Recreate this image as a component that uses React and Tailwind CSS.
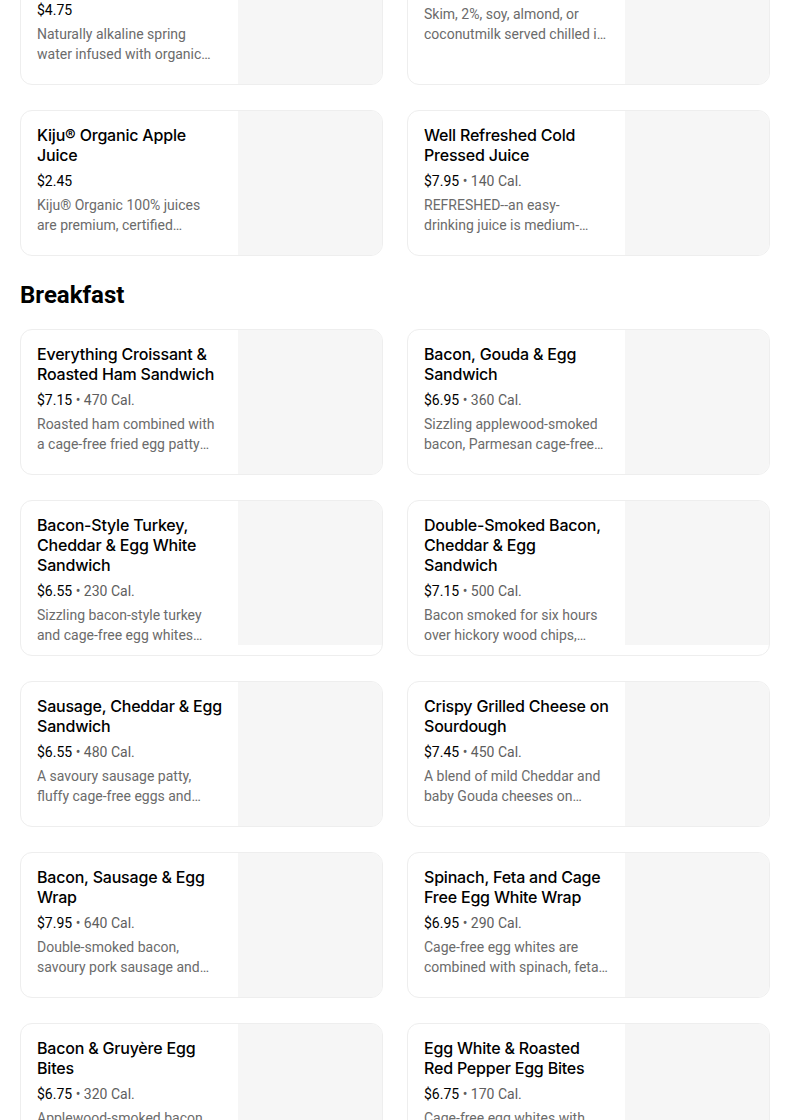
const drinks = [
  { name: 'Flow Organic Lemon Ginger Spring Water', price: '$4.75', desc: 'Naturally alkaline spring water infused with organic lemon and ginger for a refreshing taste.' },
  { name: 'Milk', price: '$2.25', cal: '130 Cal.', desc: 'Skim, 2%, soy, almond, or coconutmilk served chilled in a cup.' },
  { name: 'Kiju® Organic Apple Juice', price: '$2.45', desc: 'Kiju® Organic 100% juices are premium, certified organic and made with no added sugar.' },
  { name: 'Well Refreshed Cold Pressed Juice', price: '$7.95', cal: '140 Cal.', desc: 'REFRESHED--an easy-drinking juice is medium-bodied with notes of cucumber and mint.' },
];

const breakfast = [
  { name: 'Everything Croissant & Roasted Ham Sandwich', price: '$7.15', cal: '470 Cal.', desc: 'Roasted ham combined with a cage-free fried egg patty and Swiss cheese on a croissant.' },
  { name: 'Bacon, Gouda & Egg Sandwich', price: '$6.95', cal: '360 Cal.', desc: 'Sizzling applewood-smoked bacon, Parmesan cage-free frittata and aged Gouda.' },
  { name: 'Bacon-Style Turkey, Cheddar & Egg White Sandwich', price: '$6.55', cal: '230 Cal.', desc: 'Sizzling bacon-style turkey and cage-free egg whites with melted Cheddar.' },
  { name: 'Double-Smoked Bacon, Cheddar & Egg Sandwich', price: '$7.15', cal: '500 Cal.', desc: 'Bacon smoked for six hours over hickory wood chips, layered with a fried egg.' },
  { name: 'Sausage, Cheddar & Egg Sandwich', price: '$6.55', cal: '480 Cal.', desc: 'A savoury sausage patty, fluffy cage-free eggs and aged Cheddar cheese.' },
  { name: 'Crispy Grilled Cheese on Sourdough', price: '$7.45', cal: '450 Cal.', desc: 'A blend of mild Cheddar and baby Gouda cheeses on sourdough bread.' },
  { name: 'Bacon, Sausage & Egg Wrap', price: '$7.95', cal: '640 Cal.', desc: 'Double-smoked bacon, savoury pork sausage and cage-free scrambled eggs.' },
  { name: 'Spinach, Feta and Cage Free Egg White Wrap', price: '$6.95', cal: '290 Cal.', desc: 'Cage-free egg whites are combined with spinach, feta cheese and tomatoes.' },
  { name: 'Bacon & Gruyère Egg Bites', price: '$6.75', cal: '320 Cal.', desc: 'Applewood-smoked bacon and Gruyère cheese in cage-free egg bites.' },
  { name: 'Egg White & Roasted Red Pepper Egg Bites', price: '$6.75', cal: '170 Cal.', desc: 'Cage-free egg whites with Monterey Jack cheese and roasted red peppers.' },
];

function ItemCard({ item }) {
  return (
    <div className="flex border border-[#eeeeee] rounded-xl overflow-hidden bg-white">
      <div className="flex-1 min-w-0 px-4 pt-[14px] pb-[10px]">
        <div className="font-['Inter',sans-serif] text-[16px] leading-5 font-medium tracking-[-0.2px] text-black">{item.name}</div>
        <div className="mt-[6px] text-[14px] leading-5 text-black">
          {item.price}
          {item.cal && <span className="text-[#5e5e5e]"> • {item.cal}</span>}
        </div>
        <div className="mt-1 text-[14px] leading-5 text-[#6b6b6b] line-clamp-2">{item.desc}</div>
      </div>
      <div className="w-[144px] h-[144px] shrink-0 bg-[#f6f6f6]" />
    </div>
  );
}

export default function App() {
  return (
    <div className="bg-white min-h-screen overflow-hidden font-['Roboto',sans-serif]">
      <div className="w-[750px] ml-5 -mt-[61px]">
        <div className="grid grid-cols-2 gap-x-6 gap-y-[25px]">
          {drinks.map((d, i) => <ItemCard key={i} item={d} />)}
        </div>
        <h2 className="pt-[23px] pb-[18px] text-[24px] leading-8 font-bold text-black">Breakfast</h2>
        <div className="grid grid-cols-2 gap-x-6 gap-y-[25px]">
          {breakfast.map((d, i) => <ItemCard key={i} item={d} />)}
        </div>
      </div>
    </div>
  );
}
